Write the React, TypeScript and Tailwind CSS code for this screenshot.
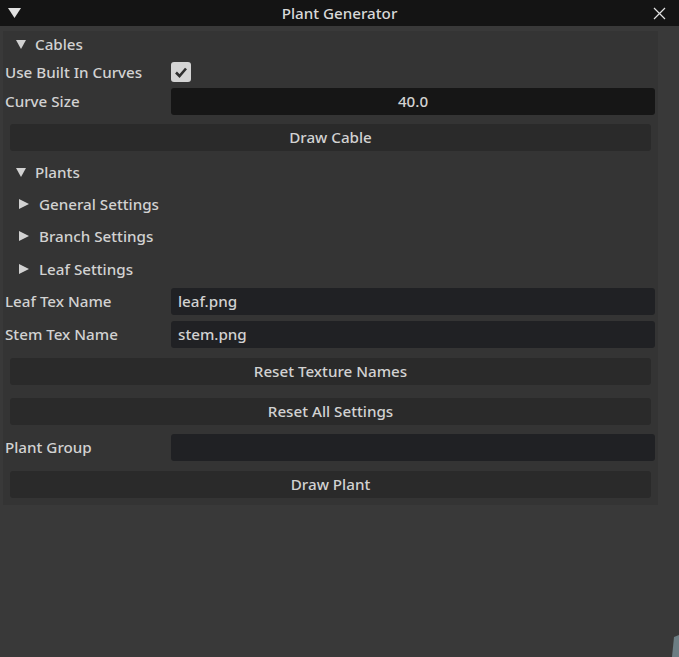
import React from 'react';

const font = { fontFamily: '"Noto Sans", "Open Sans", sans-serif' };

function DownArrow({ className }: { className?: string }) {
  return (
    <svg width="10" height="9" viewBox="0 0 10 9" className={className}>
      <polygon points="0,0 10,0 5,9" fill="#d2d2d2" />
    </svg>
  );
}

function RightArrow({ className }: { className?: string }) {
  return (
    <svg width="10" height="10" viewBox="0 0 10 10" className={className}>
      <polygon points="0,0 10,5 0,10" fill="#d2d2d2" />
    </svg>
  );
}

function Header({ label }: { label: string }) {
  return (
    <div className="flex items-center h-[26px]">
      <DownArrow className="ml-[13px]" />
      <span className="ml-[9px]">{label}</span>
    </div>
  );
}

function SubHeader({ label, mt }: { label: string; mt: string }) {
  return (
    <div className={`flex items-center h-[26px] ${mt}`}>
      <RightArrow className="ml-[16px]" />
      <span className="ml-[10px]">{label}</span>
    </div>
  );
}

function Button({ label, mt }: { label: string; mt: string }) {
  return (
    <div
      className={`${mt} ml-[7px] mr-[7px] h-[27px] rounded-[3px] bg-[#2a2a2a] flex items-center justify-center`}
    >
      {label}
    </div>
  );
}

function TextRow({ label, value, mt }: { label: string; value: string; mt: string }) {
  return (
    <div className={`flex items-center ${mt}`}>
      <span className="w-[168px] pl-[2px] shrink-0">{label}</span>
      <div className="flex-1 mr-[3px] h-[27px] rounded-[3px] bg-[#202124] flex items-center pl-[7px]">
        {value}
      </div>
    </div>
  );
}

export default function App() {
  return (
    <div
      className="relative w-[679px] h-[657px] overflow-hidden bg-[#393939] text-[15.2px] font-medium text-[#d2d2d2]"
      style={font}
    >
      {/* Title bar */}
      <div className="grid grid-cols-[40px_1fr_40px] items-center h-[26px] bg-[#141414] text-[#d8d8d8]">
        <svg width="13" height="10" viewBox="0 0 13 10" className="ml-[8px]">
          <polygon points="0,0 13,0 6.5,10" fill="#e2e2e2" />
        </svg>
        <div className="text-center">Plant Generator</div>
        <svg width="13" height="13" viewBox="0 0 13 13" className="ml-[14px]">
          <path d="M1 1 L12 12 M12 1 L1 12" stroke="#e2e2e2" strokeWidth="1.2" />
        </svg>
      </div>

      {/* Child panel */}
      <div className="mt-[5px] ml-[3px] w-[655px] bg-[#343434] pb-[7px]">
        <Header label="Cables" />

        <div className="flex items-center mt-[5px] h-[20px]">
          <span className="w-[168px] pl-[2px] shrink-0">Use Built In Curves</span>
          <div className="w-[20px] h-[20px] rounded-[3px] bg-[#d4d4d4] flex items-center justify-center">
            <svg width="14" height="12" viewBox="0 0 14 12">
              <path d="M2 6.5 L5.5 10 L12 2.5" stroke="#2e2e2e" strokeWidth="2.6" fill="none" />
            </svg>
          </div>
        </div>

        <div className="flex items-center mt-[6px]">
          <span className="w-[168px] pl-[2px] shrink-0">Curve Size</span>
          <div className="flex-1 mr-[3px] h-[27px] rounded-[3px] bg-[#161616] flex items-center justify-center">
            40.0
          </div>
        </div>

        <Button label="Draw Cable" mt="mt-[9px]" />

        <div className="mt-[8px]">
          <Header label="Plants" />
        </div>
        <SubHeader label="General Settings" mt="mt-[6px]" />
        <SubHeader label="Branch Settings" mt="mt-[6px]" />
        <SubHeader label="Leaf Settings" mt="mt-[7px]" />

        <TextRow label="Leaf Tex Name" value="leaf.png" mt="mt-[6px]" />
        <TextRow label="Stem Tex Name" value="stem.png" mt="mt-[6px]" />

        <Button label="Reset Texture Names" mt="mt-[10px]" />
        <Button label="Reset All Settings" mt="mt-[13px]" />

        <TextRow label="Plant Group" value="" mt="mt-[9px]" />

        <Button label="Draw Plant" mt="mt-[10px]" />
      </div>

      {/* Resize grip */}
      <svg width="8" height="22" viewBox="0 0 8 22" className="absolute right-0 bottom-0">
        <polygon points="8,0 8,22 1,22 3,2" fill="#6c7d83" />
      </svg>
    </div>
  );
}
